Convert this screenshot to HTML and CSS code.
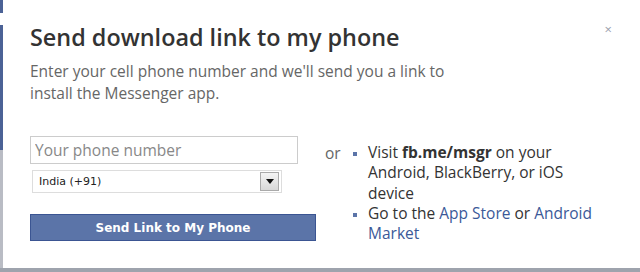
FILE: index.html
```html
<!DOCTYPE html>
<html>
<head>
    <meta charset="UTF-8">
    <title>Send download link to my phone</title>
    <link rel="stylesheet" href="styles.css">
</head>
<body>
    <div class="screen">
        <div class="main">
            <div class="edge">
                <div class="edge-blue top"></div>
                <div class="edge-gap"></div>
                <div class="edge-blue"></div>
                <div class="edge-grey"></div>
            </div>

            <div class="dialog">
                <div class="header">
                    <h2>Send download link to my phone</h2>
                    <span class="close">&times;</span>
                </div>
                <p class="intro">Enter your cell phone number and we'll send you a link to install the Messenger app.</p>

                <div class="columns">
                    <div class="form">
                        <input type="text" class="phone" placeholder="Your phone number">
                        <div class="select">
                            <span>India (+91)</span>
                            <span class="arrow"><span class="tri"></span></span>
                        </div>
                        <button class="send">Send Link to My Phone</button>
                    </div>

                    <div class="or">or</div>

                    <ul class="options">
                        <li>Visit <b>fb.me/msgr</b> on your Android, BlackBerry, or iOS device</li>
                        <li>Go to the <a href="#">App Store</a> or <a href="#">Android Market</a></li>
                    </ul>
                </div>
            </div>
        </div>
        <div class="bottom"></div>
    </div>
</body>
</html>
```

FILE: styles.css
```css
body {
    margin: 0;
    font-family: "Open Sans", "DejaVu Sans", sans-serif;
    background: #fff;
}

.screen {
    width: 640px;
    height: 272px;
    display: flex;
    flex-direction: column;
    overflow: hidden;
}

.main {
    flex: 1;
    display: flex;
}

.edge {
    width: 3px;
    display: flex;
    flex-direction: column;
}

.edge-blue {
    height: 125px;
    background: #4b6296;
}

.edge-blue.top {
    height: 13px;
}

.edge-gap {
    height: 12px;
}

.edge-grey {
    flex: 1;
    background: #b9bcc4;
}

.bottom {
    height: 4px;
    background: #9ea3ad;
}

.dialog {
    flex: 1;
    padding: 21px 0 0 27px;
}

.header {
    display: flex;
    justify-content: space-between;
    align-items: flex-start;
    padding-right: 28px;
}

h2 {
    margin: 0;
    font-size: 23.4px;
    line-height: 32px;
    font-weight: 600;
    color: #333;
}

.close {
    color: #9aa0ad;
    font-size: 13px;
    margin-top: -1px;
}

.intro {
    margin: 7px 0 0;
    width: 420px;
    font-size: 15.5px;
    line-height: 22px;
    color: #666;
}

.columns {
    display: flex;
    margin-top: 32px;
}

.form {
    width: 285px;
}

.phone {
    display: block;
    box-sizing: border-box;
    width: 268px;
    height: 28px;
    padding: 2px 4px;
    border: 1px solid #ccc;
    font-family: inherit;
    font-size: 15.5px;
    color: #333;
}

.phone::placeholder {
    color: #888;
}

.select {
    box-sizing: border-box;
    width: 250px;
    height: 23px;
    margin: 6px 0 0 2px;
    border: 1px solid #ddd;
    display: flex;
    justify-content: space-between;
    align-items: center;
    padding-left: 6px;
    font-family: "DejaVu Sans", sans-serif;
    font-size: 11px;
    color: #222;
}

.arrow {
    width: 17px;
    height: 17px;
    margin-right: 2px;
    border: 1px solid #aaa;
    background: linear-gradient(#f4f4f4, #d8d8d8);
    display: flex;
    align-items: center;
    justify-content: center;
}

.tri {
    width: 0;
    height: 0;
    border-left: 4px solid transparent;
    border-right: 4px solid transparent;
    border-top: 5px solid #111;
}

.send {
    display: block;
    width: 286px;
    height: 27px;
    margin-top: 21px;
    background: #5b74a8;
    border: 1px solid #3b5592;
    color: #fff;
    font-family: "DejaVu Sans", sans-serif;
    font-weight: bold;
    font-size: 12px;
    cursor: pointer;
}

.or {
    width: 15px;
    margin: 6px 0 0 10px;
    font-size: 15.5px;
    color: #666;
}

.options {
    margin: 6px 0 0;
    padding: 0 0 0 28px;
    width: 230px;
    font-size: 15.5px;
    line-height: 20.3px;
    color: #333;
    list-style: square;
}

.options li::marker {
    color: #5b74a8;
    font-size: 12px;
}

.options a {
    color: #3b5998;
    text-decoration: none;
}
```
